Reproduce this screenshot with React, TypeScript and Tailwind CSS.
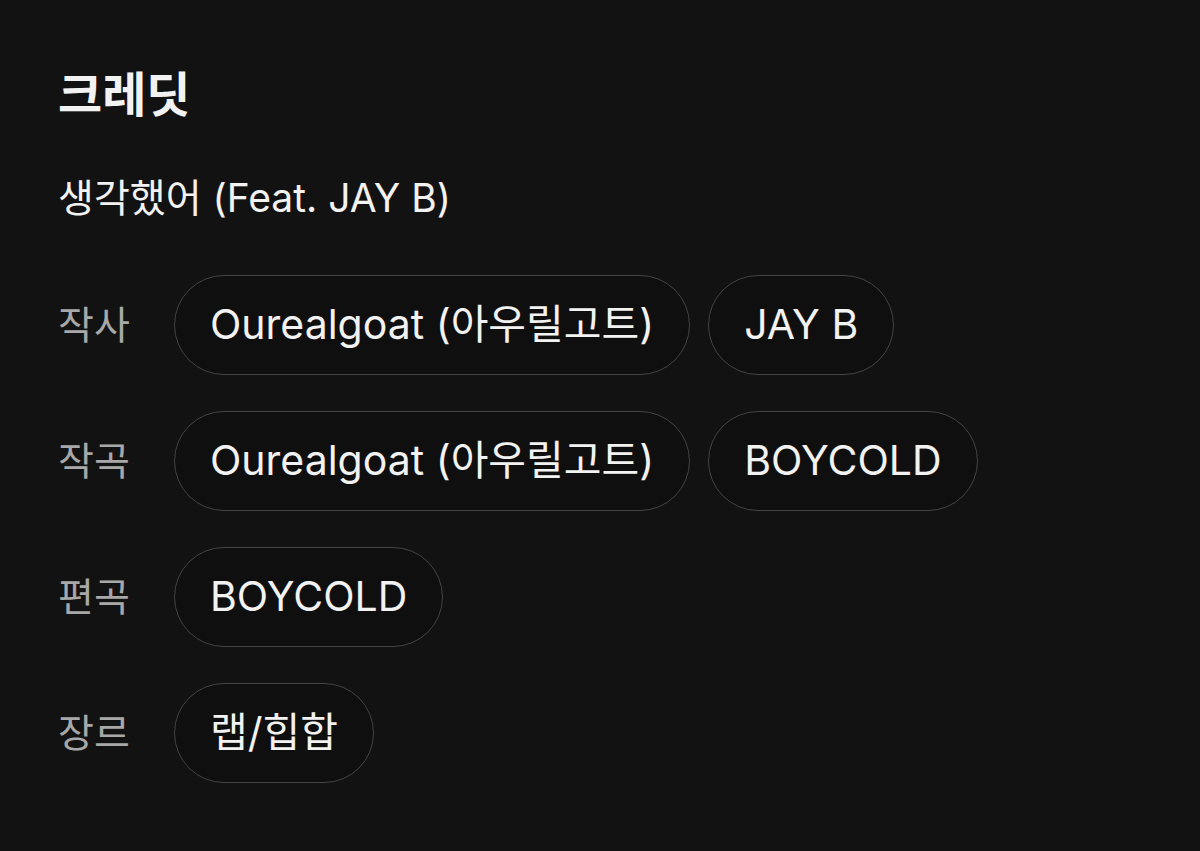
import React from 'react';

const credits = [
  { label: '작사', names: ['Ourealgoat (아우릴고트)', 'JAY B'] },
  { label: '작곡', names: ['Ourealgoat (아우릴고트)', 'BOYCOLD'] },
  { label: '편곡', names: ['BOYCOLD'] },
  { label: '장르', names: ['랩/힙합'] },
];

const font = { fontFamily: 'Inter, "Noto Sans CJK KR", sans-serif' };

const App: React.FC = () => {
  return (
    <div className="min-h-screen bg-[#121212] px-[58px] pt-[67px] text-[#f2f2f2]" style={font}>
      <h1 className="text-[48px] font-bold leading-[56px]">크레딧</h1>
      <p className="mt-[53px] text-[39px] leading-[44px]">생각했어 (Feat. JAY B)</p>
      <div className="mt-[55px] flex flex-col gap-[36px]">
        {credits.map((row) => (
          <div key={row.label} className="flex items-center">
            <span className="w-[116px] shrink-0 text-[39px] text-[#a8a8a8]">{row.label}</span>
            <div className="flex gap-[18px]">
              {row.names.map((name) => (
                <div
                  key={name}
                  className="flex h-[100px] items-center rounded-full border-[1.5px] border-[#444444] bg-[#0f0f0f] px-[35px] text-[41px]"
                >
                  {name}
                </div>
              ))}
            </div>
          </div>
        ))}
      </div>
    </div>
  );
};

export default App;
